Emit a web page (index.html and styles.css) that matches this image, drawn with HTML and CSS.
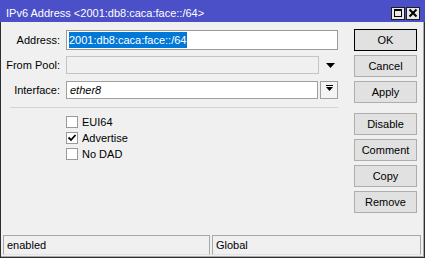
FILE: index.html
```html
<!DOCTYPE html>
<html>
<head>
<meta charset="utf-8">
<link rel="stylesheet" href="styles.css">
</head>
<body>
<div class="window">
  <div class="titlebar">
    <span class="title">IPv6 Address &lt;2001:db8:caca:face::/64&gt;</span>
    <div class="tbtns">
      <span class="tbtn"><svg width="12" height="11" viewBox="0 0 12 11"><rect x="2.5" y="1.5" width="7" height="7" fill="none" stroke="#000" stroke-width="1"/><rect x="2" y="1" width="8" height="2" fill="#000"/></svg></span>
      <span class="tbtn"><svg width="12" height="11" viewBox="0 0 12 11"><path d="M2.5 1.5 L9.5 8.5 M9.5 1.5 L2.5 8.5" stroke="#000" stroke-width="2"/></svg></span>
    </div>
  </div>
  <div class="main">
    <div class="form">
      <div class="row r-addr">
        <span class="lbl">Address:</span>
        <div class="input addr"><span class="sel">2001:db8:caca:face::/64</span></div>
      </div>
      <div class="row r-pool">
        <span class="lbl">From Pool:</span>
        <div class="input pool"></div>
        <span class="pool-arrow"><svg width="9" height="5" viewBox="0 0 9 5"><path d="M0 0 H9 L4.5 5 Z" fill="#000"/></svg></span>
      </div>
      <div class="row r-iface">
        <span class="lbl">Interface:</span>
        <div class="input iface"><i>ether8</i></div>
        <span class="dd"><svg width="7" height="6" viewBox="0 0 7 6"><rect x="0" y="0" width="7" height="1" fill="#000"/><path d="M0 2 H7 L3.5 6 Z" fill="#000"/></svg></span>
      </div>
      <div class="sep"></div>
      <div class="checks">
        <div class="check"><span class="box"></span><span>EUI64</span></div>
        <div class="check"><span class="box"><svg width="10" height="10" viewBox="0 0 10 10"><path d="M1.5 4.5 L4 7 L8.5 2" fill="none" stroke="#000" stroke-width="1.8"/></svg></span><span>Advertise</span></div>
        <div class="check"><span class="box"></span><span>No DAD</span></div>
      </div>
    </div>
    <div class="buttons">
      <div class="btn default">OK</div>
      <div class="btn">Cancel</div>
      <div class="btn">Apply</div>
      <div class="btn spaced">Disable</div>
      <div class="btn">Comment</div>
      <div class="btn">Copy</div>
      <div class="btn">Remove</div>
    </div>
  </div>
  <div class="status">
    <div class="cell first">enabled</div>
    <div class="cell second">Global</div>
  </div>
</div>
</body>
</html>
```
FILE: styles.css
```css
html, body {
  margin: 0;
  padding: 0;
  background: #ffffff;
}
body {
  font-family: "Liberation Sans", Arial, sans-serif;
  font-size: 11px;
  color: #000;
}
.window {
  width: 425px;
  height: 258px;
  box-sizing: border-box;
  border: 1px solid #2e2e2e;
  border-top: none;
  background: #f0f0f0;
  display: flex;
  flex-direction: column;
  box-shadow: inset -1px -1px 0 #a8a8a8;
}
.titlebar {
  height: 22px;
  margin: 0 -1px;
  box-sizing: border-box;
  background: #4b50c8;
  color: #fff;
  display: flex;
  align-items: flex-end;
  padding: 0 5px 2px 6px;
}
.title {
  line-height: 13px;
  white-space: nowrap;
}
.tbtns {
  margin-left: auto;
  display: flex;
  gap: 1px;
}
.tbtn {
  width: 14px;
  height: 13px;
  box-sizing: border-box;
  border: 1px solid #1e1e1e;
  background: #e8e8e8;
  display: flex;
  align-items: center;
  justify-content: center;
}
.main {
  flex: 1;
  display: flex;
  padding-right: 7px;
}
.form {
  width: 337px;
  padding-top: 8px;
}
.row {
  display: flex;
  align-items: center;
}
.r-pool { margin-top: 6px; }
.r-iface { margin-top: 7px; }
.lbl {
  width: 59px;
  margin-right: 6px;
  text-align: right;
  white-space: nowrap;
}
.input {
  box-sizing: border-box;
  border: 1px solid #a0a0a0;
  background: #fff;
  display: flex;
  align-items: center;
}
.addr {
  width: 272px;
  height: 20px;
  padding-left: 2px;
  border-color: #9a9a9a;
}
.sel {
  background: #0078d7;
  color: #fff;
  line-height: 16px;
  padding-right: 1px;
}
.pool {
  width: 253px;
  height: 18px;
  background: #f0f0f0;
  border-color: #c4c4c4;
}
.pool-arrow {
  width: 19px;
  display: flex;
  justify-content: flex-end;
  padding-right: 3px;
  box-sizing: border-box;
}
.iface {
  width: 252px;
  height: 18px;
  padding-left: 3px;
}
.dd {
  width: 18px;
  height: 18px;
  margin-left: 2px;
  box-sizing: border-box;
  border: 1px solid #a0a0a0;
  background: #f4f4f4;
  display: flex;
  align-items: center;
  justify-content: center;
  padding-bottom: 5px;
}
.sep {
  margin: 8px 0 0 9px;
  width: 328px;
  height: 1px;
  background: #d4d4d4;
}
.checks {
  margin-top: 6px;
}
.check {
  height: 16px;
  display: flex;
  align-items: center;
  padding-left: 65px;
}
.box {
  width: 12px;
  height: 12px;
  box-sizing: border-box;
  border: 1px solid #9a9a9a;
  background: #fff;
  margin-right: 4px;
  display: flex;
  align-items: center;
  justify-content: center;
}
.buttons {
  margin-left: 16px;
  padding-top: 7px;
  display: flex;
  flex-direction: column;
  gap: 4px;
}
.btn {
  width: 63px;
  height: 22px;
  box-sizing: border-box;
  border: 1px solid #adadad;
  background: #e1e1e1;
  display: flex;
  align-items: center;
  justify-content: center;
}
.btn.default {
  border-color: #000;
}
.btn.spaced {
  margin-top: 6px;
}
.status {
  display: flex;
  gap: 2px;
  padding: 0 3px 2px 2px;
}
.cell {
  height: 20px;
  box-sizing: border-box;
  border: 1px solid #a8a8a8;
  border-bottom-color: #e4e4e4;
  display: flex;
  align-items: center;
  padding-left: 3px;
}
.cell.first { width: 207px; }
.cell.second { flex: 1; }
```
